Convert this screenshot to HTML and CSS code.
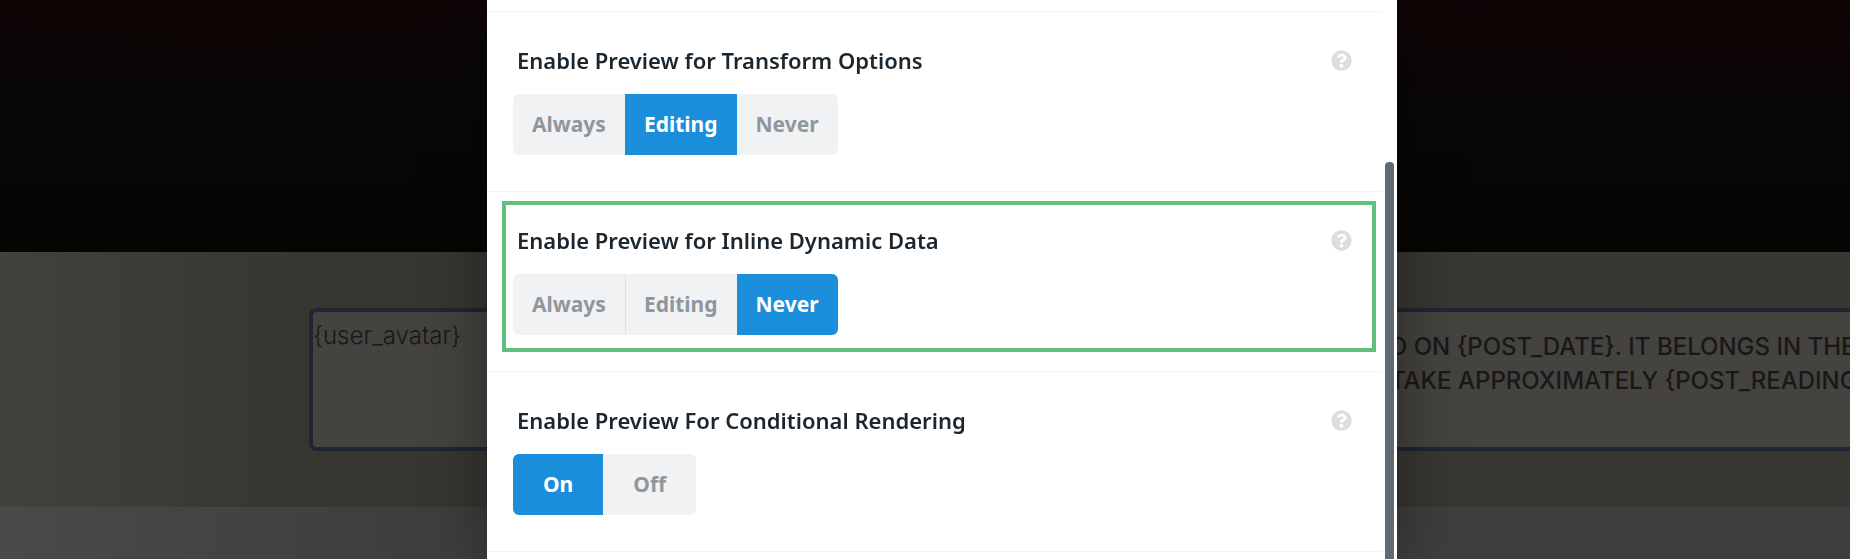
FILE: index.html
```html
<!DOCTYPE html>
<html lang="en">
<head>
    <meta charset="UTF-8">
    <meta name="viewport" content="width=device-width, initial-scale=1.0">
    <title>Preview Settings</title>
    <link rel="stylesheet" href="styles.css">
</head>
<body>
    <svg class="sprite" aria-hidden="true">
        <symbol id="help" viewBox="0 0 512 512">
            <path d="M504 256c0 136.997-111.043 248-248 248S8 392.997 8 256C8 119.083 119.043 8 256 8s248 111.083 248 248zM262.655 90c-54.497 0-89.255 22.957-116.549 63.758-3.536 5.286-2.353 12.415 2.715 16.258l34.699 26.31c5.205 3.947 12.621 3.008 16.665-2.122 17.864-22.658 30.113-35.797 57.303-35.797 20.429 0 45.698 13.148 45.698 32.958 0 14.976-12.363 22.667-32.534 33.976C247.128 238.528 216 254.941 216 296v4c0 6.627 5.373 12 12 12h56c6.627 0 12-5.373 12-12v-1.333c0-28.462 83.186-29.647 83.186-106.667 0-58.002-60.165-102-116.531-102zM256 338c-25.365 0-46 20.635-46 46 0 25.364 20.635 46 46 46s46-20.636 46-46c0-25.365-20.635-46-46-46z"/>
        </symbol>
    </svg>

    <div class="page">
        <div class="hero"></div>
        <div class="band">
            <div class="meta-box">
                <p class="avatar">{user_avatar}</p>
                <p class="post-info">D on {post_date}. It belongs in the<br>take approximately {post_reading</p>
            </div>
        </div>
        <div class="below"></div>
    </div>

    <div class="overlay">
        <div class="modal" role="dialog" aria-label="Preview settings">
            <div class="settings">
                <section class="setting">
                    <div class="setting-head">
                        <h2 id="transform">Enable Preview for Transform Options</h2>
                        <button type="button" class="help" aria-label="Help"><svg><use href="#help"/></svg></button>
                    </div>
                    <div class="choices" role="group" aria-labelledby="transform">
                        <button type="button">Always</button>
                        <button type="button" class="active">Editing</button>
                        <button type="button">Never</button>
                    </div>
                </section>

                <section class="setting highlighted">
                    <div class="setting-head">
                        <h2 id="inline">Enable Preview for Inline Dynamic Data</h2>
                        <button type="button" class="help" aria-label="Help"><svg><use href="#help"/></svg></button>
                    </div>
                    <div class="choices" role="group" aria-labelledby="inline">
                        <button type="button">Always</button>
                        <button type="button">Editing</button>
                        <button type="button" class="active">Never</button>
                    </div>
                </section>

                <section class="setting">
                    <div class="setting-head">
                        <h2 id="conditional">Enable Preview For Conditional Rendering</h2>
                        <button type="button" class="help" aria-label="Help"><svg><use href="#help"/></svg></button>
                    </div>
                    <div class="choices toggle" role="group" aria-labelledby="conditional">
                        <button type="button" class="active">On</button>
                        <button type="button">Off</button>
                    </div>
                </section>
            </div>
            <div class="scrollbar"></div>
        </div>
    </div>

    <script>
        document.querySelectorAll('.choices').forEach(function(group) {
            group.addEventListener('click', function(e) {
                if (e.target.tagName !== 'BUTTON') return;
                group.querySelector('.active').classList.remove('active');
                e.target.classList.add('active');
            });
        });
    </script>
</body>
</html>
```
FILE: styles.css
```css
* {
    box-sizing: border-box;
}
body {
    margin: 0;
    font-family: "Noto Sans", sans-serif;
    background: #3e3e3e;
}
h2, p {
    margin: 0;
}
.sprite {
    display: none;
}

/* page behind the dialog */
.page {
    display: flex;
    flex-direction: column;
    height: 100vh;
    overflow: hidden;
}
.hero {
    flex: 0 0 252px;
    background:
        radial-gradient(ellipse at 12% 0, #0f0303 0, transparent 20%),
        radial-gradient(ellipse at 93% 0, #110404 0, transparent 30%),
        linear-gradient(#0c0607, #080606 60%, #060503);
}
.band {
    flex: none;
    padding: 56px 0 56px 309px;
    background: linear-gradient(90deg, #42413d, #383631 16%, #393733);
}
.below {
    flex: 1;
    background: linear-gradient(90deg, #4a4a4a, #3e3e3e 22%, #3e3e3e);
}
.meta-box {
    display: flex;
    justify-content: space-between;
    height: 143px;
    border: 4px solid #1f2535;
    border-right: 0;
    border-radius: 8px 0 0 8px;
    background: #444340;
    color: #191817;
    font-family: Inter, sans-serif;
    font-size: 24px;
    line-height: 34px;
    overflow: hidden;
}
.avatar {
    padding-top: 7px;
    font-weight: 300;
}
.post-info {
    flex: 0 0 460px;
    min-width: 0;
    padding-top: 18px;
    font-weight: 500;
    text-transform: uppercase;
    white-space: nowrap;
}

/* dialog */
.overlay {
    position: fixed;
    inset: 0;
    display: flex;
    justify-content: center;
    padding-left: 34px;
}
.modal {
    position: relative;
    width: 910px;
    padding: 11px 15px 0 0;
    background: #fff;
    box-shadow: 0 0 60px rgba(0,0,0,0.4);
    overflow: hidden;
}
.settings {
    border-bottom: 1px solid #f3f4f5;
}
.setting {
    position: relative;
    padding: 33px 30px 36px 26px;
    border-top: 1px solid #f3f4f5;
}
.highlighted::after {
    content: "";
    position: absolute;
    inset: 9px 6px 19px 15px;
    border: 4px solid #62bf7c;
    pointer-events: none;
}
.setting-head {
    display: flex;
    justify-content: space-between;
    align-items: center;
    padding-left: 4px;
    margin-bottom: 19px;
}
h2 {
    color: #1b262e;
    font-size: 22px;
    font-weight: 600;
    line-height: 30px;
}
button {
    border: 0;
    cursor: pointer;
}
.help {
    display: flex;
    padding: 0;
    background: none;
}
.help svg {
    width: 21px;
    height: 21px;
    fill: #dcdddf;
}
.choices {
    display: inline-flex;
    vertical-align: top;
    border-radius: 6px;
    overflow: hidden;
}
.choices button {
    padding: 0 19px;
    background: #f1f2f4;
    color: #90979c;
    font-family: inherit;
    font-size: 21px;
    font-weight: 700;
    line-height: 61px;
}
.choices button:not(.active) + button:not(.active) {
    box-shadow: inset 1px 0 #dfe1e3;
}
.choices .active {
    background: #1b8edb;
    color: #fff;
}
.choices.toggle button {
    padding: 0 30px;
}
.scrollbar {
    position: absolute;
    top: 162px;
    right: 3px;
    bottom: -8px;
    width: 9px;
    border-radius: 4px;
    background: #5f6b72;
}
```
